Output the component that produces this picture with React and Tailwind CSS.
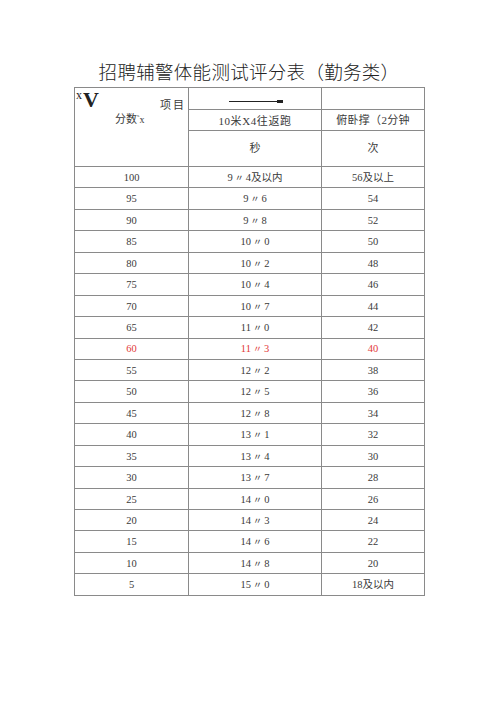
import React from "react";

const rows = [
  ["100", "9", "4及以内", "56及以上"],
  ["95", "9", "6", "54"],
  ["90", "9", "8", "52"],
  ["85", "10", "0", "50"],
  ["80", "10", "2", "48"],
  ["75", "10", "4", "46"],
  ["70", "10", "7", "44"],
  ["65", "11", "0", "42"],
  ["60", "11", "3", "40"],
  ["55", "12", "2", "38"],
  ["50", "12", "5", "36"],
  ["45", "12", "8", "34"],
  ["40", "13", "1", "32"],
  ["35", "13", "4", "30"],
  ["30", "13", "7", "28"],
  ["25", "14", "0", "26"],
  ["20", "14", "3", "24"],
  ["15", "14", "6", "22"],
  ["10", "14", "8", "20"],
  ["5", "15", "0", "18及以内"],
];

const font = { fontFamily: '"Liberation Serif", "Noto Sans CJK SC", serif' };
const cjk = { fontFamily: '"Noto Sans CJK SC", sans-serif' };

export default function App() {
  return (
    <div className="w-[500px] h-[707px] bg-white text-[#3a3a3a]" style={font}>
      <div className="pt-[59px] flex flex-col items-center">
        <div className="text-[18.5px] leading-[24px] font-light tracking-[0.3px] text-[#222] ml-[-2px]" style={cjk}>
          招聘辅警体能测试评分表（勤务类）
        </div>
        <table className="mt-[4px] ml-[-1px] border-collapse table-fixed w-[350px] text-[10.5px]">
          <colgroup>
            <col className="w-[114px]" />
            <col className="w-[133px]" />
            <col className="w-[103px]" />
          </colgroup>
          <tbody>
            <tr className="h-[22px]">
              <td rowSpan={3} className="border border-[#8a8a8a] p-0 align-top">
                <div className="relative h-[78px]">
                  <span className="absolute left-[1px] top-[1px] text-[12px] leading-none text-[#222]">x</span>
                  <span className="absolute left-[8px] top-[1px] text-[22px] font-bold leading-none text-[#222]">V</span>
                  <span className="absolute left-[85px] top-[11px] text-[11px] leading-none tracking-[2px]" style={cjk}>项目</span>
                  <span className="absolute left-[40px] top-[25px] text-[11px] leading-none" style={cjk}>
                    分数<span className="text-[7px] align-top">ˢ</span><span className="text-[10px]" style={{ fontFamily: '"Liberation Serif", serif' }}>x</span>
                  </span>
                </div>
              </td>
              <td className="border border-[#8a8a8a] p-0">
                <div className="flex items-center justify-center pt-[6px] pl-[2px]">
                  <div className="w-[48px] h-[1.5px] bg-[#222]" />
                  <div className="w-[6px] h-[3px] bg-[#222]" />
                </div>
              </td>
              <td className="border border-[#8a8a8a] p-0"></td>
            </tr>
            <tr className="h-[21px]">
              <td className="border border-[#8a8a8a] p-0 text-center text-[11px] tracking-[0.6px] pt-[2px]">10米X4往返跑</td>
              <td className="border border-[#8a8a8a] p-0 text-center text-[11px] whitespace-nowrap overflow-hidden tracking-[0.3px]">俯卧撑（2分钟</td>
            </tr>
            <tr className="h-[36px]">
              <td className="border border-[#8a8a8a] p-0 text-center text-[11px]">秒</td>
              <td className="border border-[#8a8a8a] p-0 text-center text-[11px]">次</td>
            </tr>
            {rows.map((r) => {
              const red = r[0] === "60";
              return (
                <tr key={r[0]} className={"h-[21.45px] " + (red ? "text-[#e23a3a]" : "")}>
                  <td className="border border-[#8a8a8a] p-0 text-center leading-none pt-[2px]">{r[0]}</td>
                  <td className="border border-[#8a8a8a] p-0 text-center leading-none pt-[2px]">
                    {r[1]}
                    <span className="mx-[2px] text-[9px]">〃</span>
                    {r[2]}
                  </td>
                  <td className="border border-[#8a8a8a] p-0 text-center leading-none pt-[2px]">{r[3]}</td>
                </tr>
              );
            })}
          </tbody>
        </table>
      </div>
    </div>
  );
}
